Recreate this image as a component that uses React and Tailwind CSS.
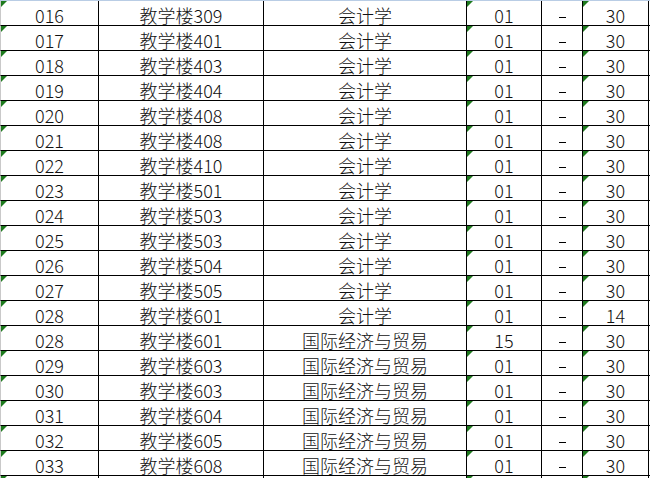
const rows = [
  ["016", "教学楼309", "会计学", "01", "30"],
  ["017", "教学楼401", "会计学", "01", "30"],
  ["018", "教学楼403", "会计学", "01", "30"],
  ["019", "教学楼404", "会计学", "01", "30"],
  ["020", "教学楼408", "会计学", "01", "30"],
  ["021", "教学楼408", "会计学", "01", "30"],
  ["022", "教学楼410", "会计学", "01", "30"],
  ["023", "教学楼501", "会计学", "01", "30"],
  ["024", "教学楼503", "会计学", "01", "30"],
  ["025", "教学楼503", "会计学", "01", "30"],
  ["026", "教学楼504", "会计学", "01", "30"],
  ["027", "教学楼505", "会计学", "01", "30"],
  ["028", "教学楼601", "会计学", "01", "14"],
  ["028", "教学楼601", "国际经济与贸易", "15", "30"],
  ["029", "教学楼603", "国际经济与贸易", "01", "30"],
  ["030", "教学楼603", "国际经济与贸易", "01", "30"],
  ["031", "教学楼604", "国际经济与贸易", "01", "30"],
  ["032", "教学楼605", "国际经济与贸易", "01", "30"],
  ["033", "教学楼608", "国际经济与贸易", "01", "30"],
  ["", "", "", "", ""],
];

function Mark() {
  return (
    <span className="absolute left-0 top-0 w-0 h-0 border-t-[6px] border-r-[6px] border-t-[#1e7a1e] border-r-transparent" />
  );
}

function Cell({ w, mark, children }) {
  return (
    <div className={`relative ${w} h-full shrink-0 border-r border-black flex items-center justify-center pt-[3px]`}>
      {mark && <Mark />}
      {children}
    </div>
  );
}

export default function App() {
  return (
    <div
      className="w-[650px] h-[478px] overflow-hidden bg-white text-[18px] text-[#111] border-t border-[#b9cde5]"
      style={{ fontFamily: '"Noto Sans CJK SC", sans-serif', fontWeight: 300 }}
    >
      {rows.map((r, i) => (
        <div key={i} className="flex h-[25px] border-b border-black border-l border-l-[#c9c9c9] leading-none">
          <Cell w="w-[98px]" mark>{r[0]}</Cell>
          <Cell w="w-[165px]">{r[1]}</Cell>
          <Cell w="w-[203px]">{r[2]}</Cell>
          <Cell w="w-[75px]" mark>{r[3]}</Cell>
          <Cell w="w-[41px]">{r[0] && <span className="block self-start w-[7px] h-px bg-black mt-[13px]" />}</Cell>
          <Cell w="w-[66px]" mark>{r[4]}</Cell>
        </div>
      ))}
    </div>
  );
}
